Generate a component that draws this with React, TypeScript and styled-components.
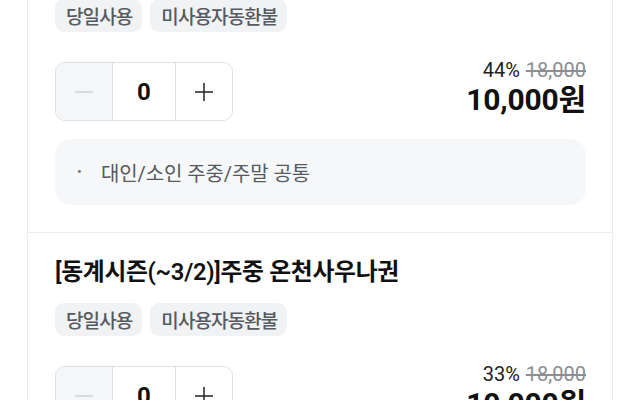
import React from "react";
import styled, { createGlobalStyle } from "styled-components";

const Global = createGlobalStyle`
  html, body { margin: 0; padding: 0; background: #ffffff; overflow: hidden; }
  body { font-family: Roboto, "Noto Sans CJK KR", sans-serif; color: #111; }
`;

const Page = styled.div`
  width: 640px;
  height: 400px;
  overflow: hidden;
  background: #fff;
`;

const Panel = styled.div`
  margin-left: 27px;
  width: 584px;
  border-left: 1px solid #ececec;
  border-right: 1px solid #ececec;
  margin-top: -1px;
`;

const Card = styled.section<{ $top: number }>`
  padding: ${(p) => p.$top}px 26px 27px 27px;
  border-bottom: 1px solid #ebebeb;
`;

const Title = styled.h2`
  margin: 0 0 16px;
  font-size: 23.8px;
  line-height: 30px;
  font-weight: 600;
  color: #111;
  letter-spacing: -0.3px;
`;

const Tags = styled.div`
  display: flex;
  gap: 8px;
`;

const Tag = styled.span`
  height: 33px;
  display: inline-flex;
  align-items: center;
  padding: 0 10px 0 11px;
  border-radius: 9px;
  background: #f1f2f4;
  color: #555a60;
  font-size: 19px;
  letter-spacing: -0.9px;
  font-weight: 500;
`;

const Row = styled.div`
  margin-top: 30px;
  display: flex;
  justify-content: space-between;
  align-items: flex-start;
`;

const Stepper = styled.div`
  display: grid;
  grid-template-columns: 56px 64px 56px;
  height: 57px;
  border: 1px solid #dedfe2;
  border-radius: 10px;
  overflow: hidden;
`;

const StepBtn = styled.button<{ $disabled?: boolean }>`
  border: none;
  padding: 0;
  margin: 0;
  display: flex;
  align-items: center;
  justify-content: center;
  background: ${(p) => (p.$disabled ? "#f5f6f8" : "#fff")};
  color: ${(p) => (p.$disabled ? "#cfd1d5" : "#222")};
`;

const Count = styled.div`
  display: flex;
  align-items: center;
  justify-content: center;
  border-left: 1px solid #dedfe2;
  border-right: 1px solid #dedfe2;
  font-size: 24px;
  font-weight: 700;
  color: #111;
`;

const Price = styled.div`
  display: flex;
  flex-direction: column;
  align-items: flex-end;
`;

const DiscountLine = styled.div`
  font-size: 20px;
  line-height: 22px;
  color: #222;
  display: flex;
  gap: 6px;
  margin-top: -3px;
`;

const Original = styled.span`
  color: #8b8e93;
  text-decoration: line-through;
`;

const Final = styled.div`
  margin-top: 2px;
  font-size: 30px;
  line-height: 34px;
  font-weight: 700;
  color: #111;
  letter-spacing: -0.2px;
`;

const Note = styled.ul`
  margin: 18px 0 0;
  list-style: none;
  height: 66px;
  box-sizing: border-box;
  padding: 0 22px;
  background: #f6f7f9;
  border-radius: 16px;
  display: flex;
  align-items: center;
`;

const NoteItem = styled.li`
  display: flex;
  align-items: center;
  font-size: 20px;
  letter-spacing: -0.1px;
  color: #555a60;
  &::before {
    content: "•";
    color: #777;
    font-size: 14px;
    width: 24px;
  }
`;

const Minus = () => (
  <svg width="20" height="20" viewBox="0 0 20 20">
    <path d="M1 10h18" stroke="currentColor" strokeWidth="1.5" />
  </svg>
);

const Plus = () => (
  <svg width="20" height="20" viewBox="0 0 20 20">
    <path d="M1 10h18M10 1v18" stroke="currentColor" strokeWidth="1.5" />
  </svg>
);

type Item = {
  title?: string;
  discount: string;
  original: string;
  price: string;
  note?: string;
  top: number;
};

const items: Item[] = [
  { discount: "44%", original: "18,000", price: "10,000원", note: "대인/소인 주중/주말 공통", top: 0 },
  { title: "[동계시즌(~3/2)]주중 온천사우나권", discount: "33%", original: "18,000", price: "10,000원", note: "대인/소인 주중/주말 공통", top: 24 },
];

export default function App() {
  return (
    <Page>
      <Global />
      <Panel>
        {items.map((it, i) => (
          <Card key={i} $top={it.top}>
            {it.title && <Title>{it.title}</Title>}
            <Tags>
              <Tag>당일사용</Tag>
              <Tag>미사용자동환불</Tag>
            </Tags>
            <Row>
              <Stepper>
                <StepBtn $disabled aria-label="감소"><Minus /></StepBtn>
                <Count>0</Count>
                <StepBtn aria-label="증가"><Plus /></StepBtn>
              </Stepper>
              <Price>
                <DiscountLine>
                  <span>{it.discount}</span>
                  <Original>{it.original}</Original>
                </DiscountLine>
                <Final>{it.price}</Final>
              </Price>
            </Row>
            {it.note && (
              <Note>
                <NoteItem>{it.note}</NoteItem>
              </Note>
            )}
          </Card>
        ))}
      </Panel>
    </Page>
  );
}
